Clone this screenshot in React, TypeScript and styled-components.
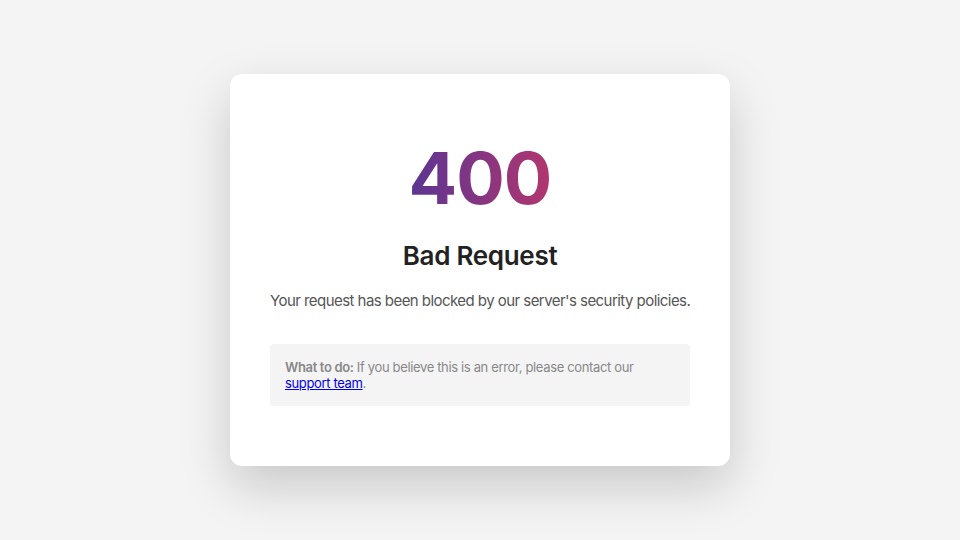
import React from "react";
import styled, { createGlobalStyle } from "styled-components";

const GlobalStyle = createGlobalStyle`
  html, body {
    margin: 0;
    padding: 0;
    background: #f4f4f4;
    font-family: Inter, "Noto Sans", "Liberation Sans", sans-serif;
  }
`;

const Page = styled.main`
  min-height: 540px;
  display: flex;
  align-items: center;
  justify-content: center;
`;

const Card = styled.section`
  width: 500px;
  box-sizing: border-box;
  padding: 68px 40px 60px;
  background: #ffffff;
  border-radius: 12px;
  box-shadow: 0 20px 50px rgba(0, 0, 0, 0.18);
  text-align: center;
`;

const Code = styled.h1`
  margin: 0;
  font-size: 72px;
  line-height: 1;
  font-weight: 700;
  letter-spacing: -1px;
  background: linear-gradient(90deg, #5a3593 0%, #b2366e 100%);
  -webkit-background-clip: text;
  background-clip: text;
  color: transparent;
  display: inline-block;
`;

const Title = styled.h2`
  margin: 26px 0 0;
  font-size: 26px;
  line-height: 1.2;
  font-weight: 600;
  color: #222222;
  letter-spacing: -0.3px;
`;

const Message = styled.p`
  margin: 19px 0 0;
  font-size: 15px;
  line-height: 1.5;
  color: #555555;
  letter-spacing: -0.55px;
  white-space: nowrap;
`;

const Hint = styled.div`
  margin-top: 32px;
  padding: 15px;
  background: #f4f4f4;
  border-radius: 4px;
  text-align: left;
  font-size: 13px;
  line-height: 16px;
  color: #888888;
  letter-spacing: -0.35px;
`;

const Strong = styled.strong`
  font-weight: 600;
`;

const Link = styled.a`
  color: #0000ee;
  text-decoration: underline;
`;

export default function App() {
  return (
    <>
      <GlobalStyle />
      <Page>
        <Card>
          <Code>400</Code>
          <Title>Bad Request</Title>
          <Message>Your request has been blocked by our server's security policies.</Message>
          <Hint>
            <Strong>What to do:</Strong> If you believe this is an error, please contact our
            <br />
            <Link href="#">support team</Link>.
          </Hint>
        </Card>
      </Page>
    </>
  );
}
